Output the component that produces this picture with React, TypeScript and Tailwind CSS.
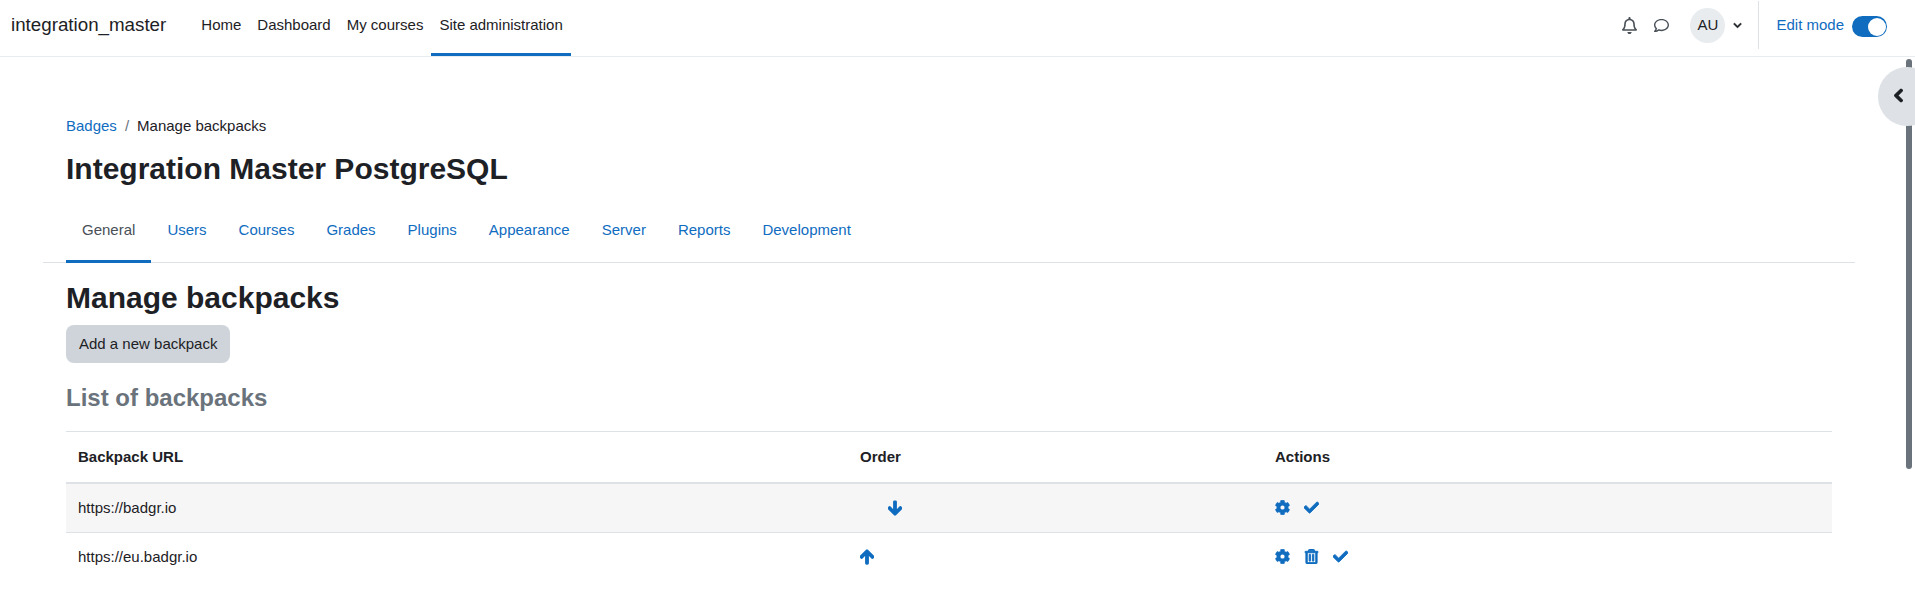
import { FaArrowDown, FaArrowUp, FaCheck, FaChevronDown, FaChevronLeft, FaCog, FaRegBell, FaRegComment, FaRegTrashAlt } from "react-icons/fa";

const navItems = ["Home", "Dashboard", "My courses", "Site administration"];
const tabs = ["Users", "Courses", "Grades", "Plugins", "Appearance", "Server", "Reports", "Development"];

export default function App() {
  return (
    <div className="relative h-[605px] overflow-hidden bg-white font-['Liberation_Sans',Arial,sans-serif] text-[15px] text-[#1d2125]">
      {/* Top navbar */}
      <header className="flex h-[57px] items-stretch border-b border-[#e9ecef] pl-[11px] pr-[28px]">
        <div className="flex items-center pb-[5px] text-[18.75px] leading-none">integration_master</div>
        <nav className="ml-[27px] flex">
          {navItems.map((item) => (
            <a
              key={item}
              className={
                "flex items-center px-2 " +
                (item === "Site administration" ? "border-b-[3px] border-[#0f6cbf] pb-[2px]" : "pb-[5px]")
              }
            >
              {item}
            </a>
          ))}
        </nav>
        <div className="ml-auto flex items-center pb-[5px]">
          <FaRegBell className="h-[17px] w-[15px] text-[#495057]" />
          <FaRegComment className="ml-[16px] h-[15px] w-[17px] text-[#495057]" />
          <div className="ml-[20px] flex h-[35px] w-[35px] items-center justify-center rounded-full bg-[#e9ecef]">AU</div>
          <FaChevronDown className="ml-[8px] h-[9px] w-[9px] stroke-[30]" />
          <div className="ml-[16px] mt-[1px] h-[48px] w-px self-start bg-[#dee2e6]" />
          <span className="ml-[17px] text-[#0f6cbf]">Edit mode</span>
          <div className="ml-[8px] mt-[2px] flex h-[21px] w-[35px] items-center justify-end rounded-full bg-[#0f6cbf] pr-[1px]">
            <div className="h-[18px] w-[18px] rounded-full bg-white" />
          </div>
        </div>
      </header>

      <main className="px-[43px] pr-[60px]">
        <div className="px-[23px] pt-[58px]">
          <div className="flex h-[22px] items-center text-[15px]">
            <a className="text-[#0f6cbf]">Badges</a>
            <span className="mx-[8px] text-[#6a737b]">/</span>
            <span>Manage backpacks</span>
          </div>
          <h1 className="mt-[14px] text-[30px] font-bold leading-[36px]">Integration Master PostgreSQL</h1>
        </div>

        {/* Secondary tabs */}
        <div className="mt-[19px] flex h-[57px] border-b border-[#dee2e6] pl-[23px]">
          <a className="flex h-[57px] items-center border-b-[3px] border-[#0f6cbf] px-[16px] pb-[5px] text-[#495057]">General</a>
          {tabs.map((tab) => (
            <a key={tab} className="flex h-[56px] items-center px-[16px] pb-[8px] text-[#0f6cbf]">{tab}</a>
          ))}
        </div>

        <div className="px-[23px]">
          <h2 className="mt-[17px] text-[30px] font-bold leading-[36px]">Manage backpacks</h2>
          <button className="mt-[9px] block h-[38px] rounded-lg bg-[#ced4da] px-[13px]">Add a new backpack</button>
          <h3 className="mt-[21px] text-[24px] font-bold leading-[28px] text-[#6a737b]">List of backpacks</h3>

          <table className="mt-[19px] w-full table-fixed border-collapse">
            <colgroup>
              <col className="w-[782px]" />
              <col className="w-[415px]" />
              <col />
            </colgroup>
            <thead>
              <tr className="h-[51px] border-t border-b-2 border-t-[#dee2e6] border-b-[#dee2e6] text-left">
                <th className="px-3 font-bold">Backpack URL</th>
                <th className="px-3 font-bold">Order</th>
                <th className="px-3 font-bold">Actions</th>
              </tr>
            </thead>
            <tbody>
              <tr className="h-[50px] border-b border-[#dee2e6] bg-[#f6f6f7]">
                <td className="px-3 pt-[1px]">https://badgr.io</td>
                <td className="px-3 pl-[40px]">
                  <FaArrowDown className="h-[16px] w-[14px] stroke-[40] text-[#0f6cbf]" />
                </td>
                <td className="px-3">
                  <div className="flex items-center gap-[14px] text-[#0f6cbf]">
                    <FaCog className="h-[15px] w-[15px] stroke-[20]" />
                    <FaCheck className="h-[15px] w-[15px] stroke-[30]" />
                  </div>
                </td>
              </tr>
              <tr className="h-[48px]">
                <td className="px-3 pt-[1px]">https://eu.badgr.io</td>
                <td className="px-3">
                  <FaArrowUp className="h-[16px] w-[14px] stroke-[40] text-[#0f6cbf]" />
                </td>
                <td className="px-3">
                  <div className="flex items-center gap-[14px] text-[#0f6cbf]">
                    <FaCog className="h-[15px] w-[15px] stroke-[20]" />
                    <FaRegTrashAlt className="h-[15px] w-[15px] stroke-[30]" />
                    <FaCheck className="h-[15px] w-[15px] stroke-[30]" />
                  </div>
                </td>
              </tr>
            </tbody>
          </table>
        </div>
      </main>

      {/* Page scrollbar and drawer toggle sit over the content */}
      <div className="absolute right-[3px] top-[59px] h-[410px] w-[6px] rounded-full bg-[#6a737b]" />
      <div className="absolute right-[-21px] top-[67px] flex h-[59px] w-[58px] items-center rounded-full bg-[#dee2e6] pb-[2px] pl-[15px]">
        <FaChevronLeft className="h-[15px] w-[11px] stroke-[40]" />
      </div>
    </div>
  );
}
